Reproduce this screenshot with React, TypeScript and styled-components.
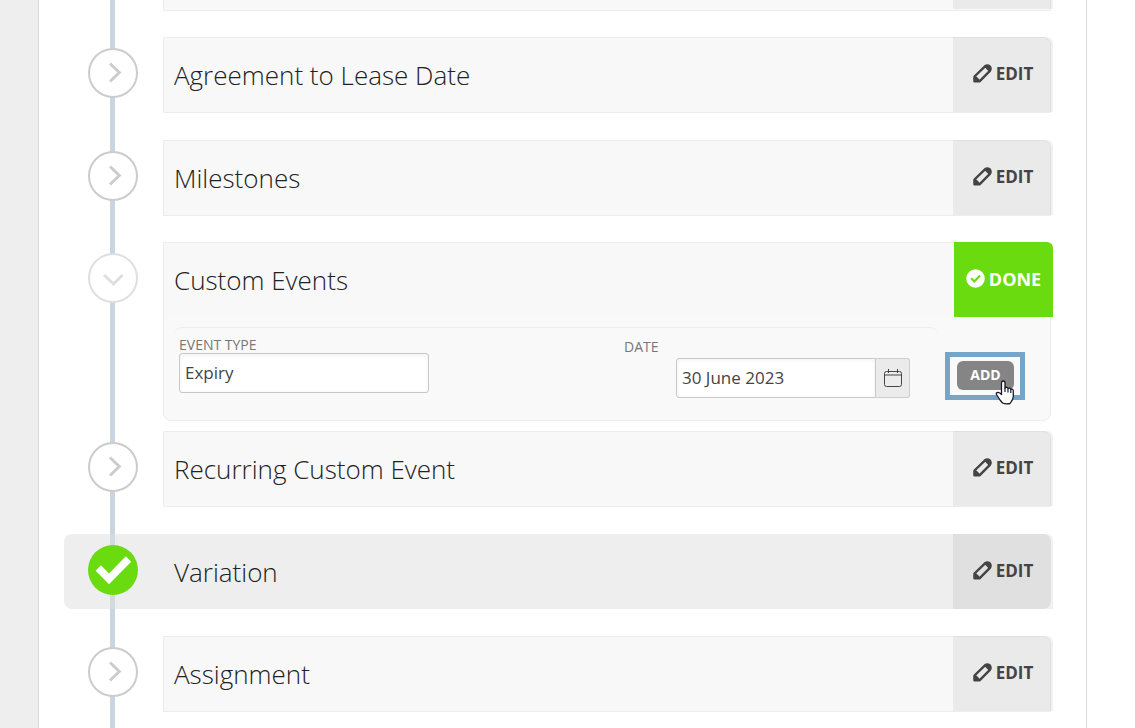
import React from "react";
import styled, { createGlobalStyle, css } from "styled-components";

const Global = createGlobalStyle`
  *, *::before, *::after { box-sizing: border-box; }
  html { background: #fff; }
  body {
    margin: 0;
    overflow: hidden;
    font-family: "Open Sans", "Noto Sans", sans-serif;
    color: #444;
  }
  button, input { font-family: inherit; }
`;

const Shell = styled.div`
  display: flex;
  height: 100vh;
  overflow: hidden;
`;

const Gutter = styled.div`
  flex: 0 0 38px;
  background: #eee;
`;

const Page = styled.main`
  flex: 1;
  min-width: 0;
  margin-right: 48px;
  padding: 0 35px 0 25px;
  border-left: 1px solid #d3dae3;
  border-right: 1px solid #d8d8e6;
`;

const Timeline = styled.ol`
  list-style: none;
  margin: 0;
  padding: 0 0 100px;
  background: linear-gradient(#c9d6e2, #c9d6e2) 46px 0 / 5px 100% no-repeat;
`;

const StepItem = styled.li<{ $gap: number; $active?: boolean }>`
  display: flex;
  align-items: flex-start;
  margin-bottom: ${(p) => p.$gap}px;
  border-radius: 8px;
  background: ${(p) => (p.$active ? "rgba(221, 221, 221, 0.5)" : "transparent")};
`;

const Rail = styled.div`
  flex: 0 0 99px;
  padding: 11px 0 0 24px;
`;

const Marker = styled.button<{ $tone: "idle" | "open" | "done" }>`
  display: flex;
  align-items: center;
  justify-content: center;
  width: 50px;
  height: 50px;
  padding: 0;
  border-radius: 50%;
  ${(p) =>
    p.$tone === "done"
      ? css`
          background: #69db0f;
          border: 0;
          color: #fff;
        `
      : css`
          background: #fff;
          border: 2px solid ${p.$tone === "open" ? "#dfdfdf" : "#ccc"};
          color: ${p.$tone === "open" ? "#dfdfdf" : "#ccc"};
        `}
`;

const Card = styled.section<{ $active?: boolean; $open?: boolean }>`
  flex: 1;
  min-width: 0;
  border: 1px solid ${(p) => (p.$active ? "transparent" : "#ededed")};
  border-radius: 0 8px ${(p) => (p.$open ? "8px 8px" : "0 0")};
  background: ${(p) => (p.$active ? "transparent" : "#f9f9f9")};
`;

const CardHeader = styled.header<{ $active?: boolean }>`
  display: flex;
  align-items: flex-start;
  height: ${(p) => (p.$active ? "73px" : "74px")};
  border-radius: 0 8px 0 0;
  background: ${(p) => (p.$active ? "transparent" : "#f8f8f8")};
`;

const Title = styled.h2`
  flex: 1;
  margin: 0;
  padding-left: 10px;
  font-size: 26px;
  font-weight: 300;
  line-height: 74px;
  color: #222;
`;

const CardButton = styled.button<{ $done?: boolean }>`
  display: flex;
  align-items: center;
  justify-content: center;
  gap: 4px;
  width: ${(p) => (p.$done ? "99px" : "100px")};
  height: 75px;
  margin: -1px -3px 0 0;
  padding: 0 0 2px;
  border: 0;
  border-radius: 0 6px 0 0;
  font-size: ${(p) => (p.$done ? "18px" : "17px")};
  font-weight: 700;
  color: ${(p) => (p.$done ? "#fff" : "#444")};
  background: ${(p) => (p.$done ? "#69db0f" : "rgba(0, 0, 0, 0.055)")};
`;

const PreviousCard = styled.div`
  display: flex;
  justify-content: flex-end;
  height: 11px;
  margin: 0 0 26px 99px;
  border: 1px solid #ededed;
  border-top: 0;
  background: #f8f8f8;
`;

const PreviousAction = styled.div`
  width: 100px;
  height: 9px;
  margin-right: -3px;
  background: rgba(0, 0, 0, 0.055);
`;

const EventForm = styled.form`
  display: flex;
  align-items: flex-start;
  height: 103px;
  padding: 0 25px 0 10px;
`;

const Fields = styled.div`
  flex: 1;
  display: flex;
  align-items: flex-start;
  justify-content: space-between;
  margin: 10px 7px 0 0;
  padding: 9px 28px 0 5px;
  border-top: 1px solid #ededed;
  border-radius: 8px 8px 0 0;
`;

const Field = styled.div<{ $offset?: boolean }>`
  display: flex;
  flex-direction: column;
  gap: ${(p) => (p.$offset ? "3px" : "0")};
  padding-top: ${(p) => (p.$offset ? "2px" : "0")};
`;

const Label = styled.label`
  font-size: 14px;
  line-height: 16px;
  text-transform: uppercase;
  color: #777;
`;

const TextInput = styled.input<{ $joined?: boolean }>`
  width: ${(p) => (p.$joined ? "200px" : "250px")};
  height: 40px;
  padding: 0 6px 2px 5px;
  border: 1px solid #c8c8c8;
  border-radius: ${(p) => (p.$joined ? "3px 0 0 3px" : "3px")};
  box-shadow: inset 0 1px 4px rgba(0, 0, 0, 0.06);
  background: #fff;
  font-size: 17px;
  color: #444;
`;

const DateGroup = styled.div`
  display: flex;
  margin-left: 52px;
`;

const CalendarButton = styled.button`
  display: flex;
  align-items: center;
  justify-content: center;
  width: 34px;
  height: 40px;
  padding: 0;
  border: 1px solid #ccc;
  border-left: 0;
  border-radius: 0 3px 3px 0;
  background: #ebebeb;
  color: #444;
`;

const Callout = styled.div`
  position: relative;
  width: 80px;
  height: 48px;
  margin-top: 35px;
  padding: 4px 6px 0 7px;
  border: 5px solid #77a5c8;
`;

const AddButton = styled.button`
  display: block;
  width: 57px;
  height: 29px;
  padding: 0 0 2px;
  border: 0;
  border-radius: 6px;
  background: #858585;
  color: #fff;
  font-size: 14px;
  font-weight: 700;
  line-height: 27px;
`;

const Pointer = styled.svg`
  position: absolute;
  left: 45px;
  top: 23px;
`;

const ChevronRight = () => (
  <svg width="46" height="46" viewBox="0 0 46 46" fill="none" stroke="currentColor" strokeWidth="3" aria-hidden>
    <path d="M20 13.500L29.300 22.500L20 31.500" />
  </svg>
);

const ChevronDown = () => (
  <svg width="46" height="46" viewBox="0 0 46 46" fill="none" stroke="currentColor" strokeWidth="3" aria-hidden>
    <path d="M14 20L23.500 29L32.500 20" />
  </svg>
);

const BigCheck = () => (
  <svg width="50" height="50" viewBox="0 0 50 50" fill="none" stroke="currentColor" strokeWidth="7.500" aria-hidden>
    <path d="M10.300 23L21 33.800L40.500 14" />
  </svg>
);

const Pencil = () => (
  <svg width="19" height="19" viewBox="0 0 19 19" aria-hidden>
    <path
      fill="none"
      stroke="currentColor"
      strokeWidth="2.400"
      strokeLinejoin="round"
      d="M1.500 17.300V12.500L12 2.300Q14.300.700 16.600 2.300Q18.400 4.500 16.900 6.800L6.500 17.300Z"
    />
    <path fill="currentColor" d="M.800 18V13L3.500 12.500L6.500 15.500L6 18ZM11.500 3Q14 0 17 2.200Q19.300 5 16.200 8Z" />
  </svg>
);

const CheckDisc = () => (
  <svg width="19" height="19" viewBox="0 0 19 19" aria-hidden>
    <circle cx="9.500" cy="9.500" r="9.300" fill="#fff" />
    <path d="M5.200 9.300L8.300 12.500L14 6.500" fill="none" stroke="#69db0f" strokeWidth="2.200" />
  </svg>
);

const CalendarIcon = () => (
  <svg width="18" height="18" viewBox="0 0 18 18" fill="none" stroke="currentColor" aria-hidden>
    <rect x=".5" y="2.500" width="17" height="15" rx="2" />
    <path d="M.5 6H17.500M4.500 0V4M13.500 0V4" />
  </svg>
);

const HandPointer = () => (
  <Pointer width="20" height="25" viewBox="0 0 20 25" aria-hidden>
    <path
      d="M6.500 14.500V3Q6.500 1 8.200 1Q10 1 10 3V8Q11 6.800 12.300 7.500L13 8.500Q15 7.300 15.800 9.300Q18 8.600 18.300 10.500V16.500Q18 20 16 22L15 23.500Q10.500 24.500 7.500 23L5 20L1.500 14.500Q.800 12.500 3 12.300Q5 12.500 6.500 14.500Z"
      fill="#fff"
      stroke="#181828"
      strokeWidth="1.300"
      strokeLinejoin="round"
    />
    <path d="M10 7.500V12M13 8.500V12.500M15.800 9.300V13" stroke="#181828" strokeWidth="1.200" fill="none" />
  </Pointer>
);

type StepProps = {
  title: string;
  active?: boolean;
  open?: boolean;
  gap?: number;
  children?: React.ReactNode;
};

function Step({ title, active, open, gap = 27, children }: StepProps) {
  return (
    <StepItem $active={active} $gap={gap}>
      <Rail>
        <Marker
          type="button"
          aria-label={`Toggle ${title}`}
          aria-expanded={!!open}
          $tone={active ? "done" : open ? "open" : "idle"}
        >
          {active ? <BigCheck /> : open ? <ChevronDown /> : <ChevronRight />}
        </Marker>
      </Rail>
      <Card $active={active} $open={open}>
        <CardHeader $active={active}>
          <Title>{title}</Title>
          <CardButton type="button" $done={open}>
            {open ? <CheckDisc /> : <Pencil />}
            {open ? "DONE" : "EDIT"}
          </CardButton>
        </CardHeader>
        {children}
      </Card>
    </StepItem>
  );
}

function CustomEventForm() {
  return (
    <EventForm onSubmit={(e) => e.preventDefault()}>
      <Fields>
        <Field>
          <Label htmlFor="event-type">Event type</Label>
          <TextInput id="event-type" type="text" defaultValue="Expiry" />
        </Field>
        <Field $offset>
          <Label htmlFor="event-date">Date</Label>
          <DateGroup>
            <TextInput id="event-date" type="text" defaultValue="30 June 2023" $joined />
            <CalendarButton type="button" aria-label="Choose date">
              <CalendarIcon />
            </CalendarButton>
          </DateGroup>
        </Field>
      </Fields>
      <Callout>
        <AddButton type="submit">ADD</AddButton>
        <HandPointer />
      </Callout>
    </EventForm>
  );
}

export default function App() {
  return (
    <>
      <Global />
      <Shell>
        <Gutter />
        <Page>
          <Timeline>
            <li>
              <PreviousCard>
                <PreviousAction />
              </PreviousCard>
            </li>
            <Step title="Agreement to Lease Date" />
            <Step title="Milestones" gap={26} />
            <Step title="Custom Events" open gap={10}>
              <CustomEventForm />
            </Step>
            <Step title="Recurring Custom Event" />
            <Step title="Variation" active />
            <Step title="Assignment" />
          </Timeline>
        </Page>
      </Shell>
    </>
  );
}
